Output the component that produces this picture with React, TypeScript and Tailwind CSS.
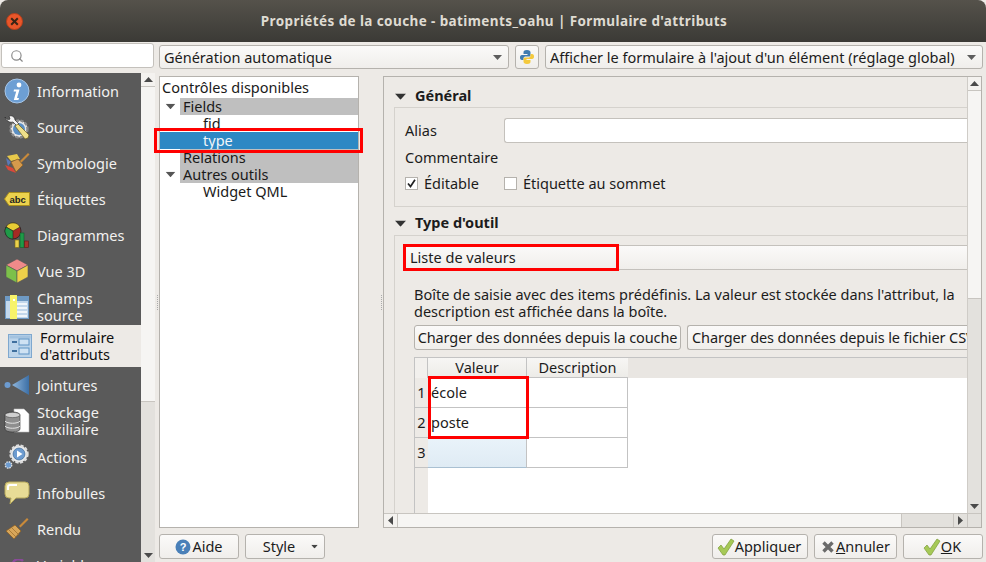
import React from "react";
import { Search } from "lucide-react";

const Caret = ({ className = "" }: { className?: string }) => (
  <svg width="9" height="5" viewBox="0 0 9 5" className={className}>
    <path d="M0 0h9L4.500 5z" fill="currentColor" />
  </svg>
);

const Combo = ({ label, className = "" }: { label: string; className?: string }) => (
  <div className={`h-6 flex items-center justify-between pl-1 pr-[6px] rounded-[3px] border border-[#b5b2ad] bg-gradient-to-b from-[#fbfaf9] to-[#f0eeeb] ${className}`}>
    <span className="whitespace-nowrap overflow-hidden pt-px">{label}</span>
    <Caret className="text-[#5d5d5d] shrink-0" />
  </div>
);

const Btn = ({ children, className = "" }: { children: React.ReactNode; className?: string }) => (
  <div className={`h-[25px] flex items-center justify-center rounded-[3px] border border-[#b5b2ad] bg-gradient-to-b from-[#fbfaf9] to-[#f0eeeb] whitespace-nowrap ${className}`}>
    {children}
  </div>
);

// sidebar icons
const InfoIcon = () => (
  <svg width="26" height="26" viewBox="0 0 26 26">
    <circle cx="13" cy="13" r="12" fill="#6d9fd4" stroke="#a8c6e6" />
    <circle cx="15" cy="7" r="2.4" fill="#fff" />
    <path d="M10 11.500h5.500L13 20h2l-.6 2H9.800l2.400-8.500H9.600z" fill="#fff" />
  </svg>
);
const SourceIcon = () => (
  <svg width="26" height="26" viewBox="0 0 26 26">
    <circle cx="15" cy="15" r="8.500" fill="#e6e6e6" stroke="#8a8a8a" strokeDasharray="3 1.600" strokeWidth="2.400" />
    <circle cx="15" cy="15" r="6" fill="#5b8fc4" />
    <path d="M1 3c2 3 4 3 5 2l-1-3c3-1 6 1 6 4l4 4-2 2-4-4C6 9 2 7 1 3z" fill="#f2f2f2" stroke="#2a2a2a" strokeWidth=".7" />
    <path d="M11 12l3-2 11 11-1 3-3 1z" fill="#efe08a" stroke="#6b5d20" strokeWidth=".7" />
  </svg>
);
const SymbIcon = () => (
  <svg width="26" height="26" viewBox="0 0 26 26">
    <path d="M3 6l10-2 3 5-9 2z" fill="#e8c94a" />
    <path d="M2 8l5 4-3 4z" fill="#5b79b8" />
    <path d="M1 15l8 3 3 5-8-3z" fill="#d8483c" />
    <path d="M7 12l7-3 5 6-7 7z" fill="#d69a4c" stroke="#8a5c20" strokeWidth=".7" />
    <path d="M16 11l8-8 1.500 1.500-8 8z" fill="#c98a3a" />
  </svg>
);
const LabelIcon = () => (
  <svg width="26" height="14" viewBox="0 0 26 14">
    <path d="M5 .5h20.500v13H5L.5 7z" fill="#ecd24d" stroke="#a88e1e" />
    <text x="5.500" y="10.500" fontSize="9.500" fontWeight="700" fill="#222" fontFamily="'Liberation Sans', sans-serif">abc</text>
  </svg>
);
const DiagIcon = () => (
  <svg width="26" height="26" viewBox="0 0 26 26">
    <circle cx="9" cy="9" r="8" fill="#a52a24" stroke="#222" strokeWidth=".8" />
    <path d="M9 9L2 5a8 8 0 0 1 14 0z" fill="#e8cc34" stroke="#222" strokeWidth=".6" />
    <path d="M9 9L2 5a8 8 0 0 0 7 12z" fill="#1f9a48" stroke="#222" strokeWidth=".6" />
    <rect x="11" y="18" width="4" height="7.500" fill="#ecd24d" stroke="#7b6a15" strokeWidth=".6" />
    <rect x="16" y="11" width="4" height="14.500" fill="#1f9a48" stroke="#0f5c28" strokeWidth=".6" />
    <rect x="20.500" y="19" width="4" height="6.500" fill="#a4332b" stroke="#5e1a14" strokeWidth=".6" />
  </svg>
);
const CubeIcon = () => (
  <svg width="24" height="26" viewBox="0 0 24 26">
    <path d="M12 1l11 6-11 6L1 7z" fill="#f08a8a" stroke="#555" strokeWidth=".6" />
    <path d="M1 7l11 6v12L1 19z" fill="#7cc04a" stroke="#555" strokeWidth=".6" />
    <path d="M23 7l-11 6v12l11-6z" fill="#eed04a" stroke="#555" strokeWidth=".6" />
  </svg>
);
const FieldsIcon = () => (
  <svg width="24" height="24" viewBox="0 0 24 24">
    <rect x=".5" y="1.500" width="23" height="22" fill="#c3d8ec" stroke="#6e9ac4" />
    <rect x="1" y="2" width="22" height="4" fill="#6e9ac4" />
    <path d="M11 9h11M11 13h11M11 17h11M11 21h11" stroke="#fff" strokeWidth="1.600" />
    <rect x="5" y="0" width="7" height="25" fill="#f7f36a" />
    <rect x="8" y="4" width="2" height="2" fill="#fff" />
  </svg>
);
const FormIcon = () => (
  <svg width="24" height="24" viewBox="0 0 24 24">
    <rect x=".5" y=".5" width="23" height="23" fill="#bcd4ea" stroke="#7fa8cf" />
    <rect x="1.500" y="1.500" width="21" height="3" fill="#a3c2df" />
    <rect x="11" y="5" width="10" height="6" fill="#cfe2f3" stroke="#5e93c4" />
    <rect x="11" y="14" width="10" height="6" fill="#cfe2f3" stroke="#5e93c4" />
    <rect x="4" y="7" width="5" height="2" fill="#3f6f9e" />
    <rect x="4" y="16" width="5" height="2" fill="#3f6f9e" />
  </svg>
);
const JoinIcon = () => (
  <svg width="26" height="22" viewBox="0 0 26 22">
    <defs>
      <linearGradient id="joinFill" x1="0" x2="1">
        <stop offset="0" stopColor="#8fb6dc" />
        <stop offset="1" stopColor="#3c6fa6" />
      </linearGradient>
    </defs>
    <circle cx="3.500" cy="11" r="3" fill="#6c9bd0" />
    <path d="M8 11L25 1v20z" fill="url(#joinFill)" />
  </svg>
);
const StorageIcon = () => (
  <svg width="26" height="26" viewBox="0 0 26 26">
    <path d="M10 1h10l5 5v18H10z" fill="#fff" stroke="#bbb" strokeWidth=".6" />
    <path d="M1 7c0-4 15-4 15 0v14c0 4-15 4-15 0z" fill="#8f8f8f" stroke="#333" strokeWidth=".6" />
    <ellipse cx="8.500" cy="7" rx="7.500" ry="2.600" fill="#d0d0d0" stroke="#444" strokeWidth=".5" />
    <path d="M1 13c2 3 13 3 15 0M1 18c2 3 13 3 15 0" stroke="#e4e4e4" fill="none" />
  </svg>
);
const ActionsIcon = () => (
  <svg width="26" height="26" viewBox="0 0 26 26">
    <circle cx="15" cy="10" r="8.500" fill="#eee" stroke="#ddd" strokeDasharray="3 1.600" strokeWidth="2.400" />
    <circle cx="15" cy="10" r="6" fill="#6c9bd0" stroke="#2e5a88" strokeWidth=".6" />
    <path d="M13 6.500v7l5.500-3.500z" fill="#fff" />
    <circle cx="4.500" cy="21" r="3.200" fill="#6c9bd0" stroke="#ddd" strokeDasharray="1.500 1" strokeWidth="1.400" />
  </svg>
);
const TipIcon = () => (
  <svg width="26" height="24" viewBox="0 0 26 24">
    <path d="M5 1h16q4 0 4 4v8q0 4-4 4H12l-6 6 1-6H5q-4 0-4-4V5q0-4 4-4z" fill="#e8dc96" stroke="#b7a95c" />
    <path d="M4 9V6q0-2 2-2h7" stroke="#fff" strokeWidth="2" fill="none" />
  </svg>
);
const BrushIcon = () => (
  <svg width="24" height="24" viewBox="0 0 24 24">
    <path d="M14 9L22 1l1.500 1.500-8 8z" fill="#c98a3a" />
    <path d="M1 14l9-6 6 6-7 8z" fill="#d8a65a" stroke="#8a5c20" strokeWidth=".7" />
    <path d="M4 13l7 7M7 11l7 7" stroke="#9a6a2a" strokeWidth=".7" />
  </svg>
);
const VarIcon = () => (
  <svg width="20" height="12" viewBox="0 0 20 12">
    <path d="M16 2C13-1 7 0 6 4S5 10 4 12" stroke="#8a4a9a" strokeWidth="2.400" fill="none" />
  </svg>
);

const navItems = [
  { label: "Information", icon: <InfoIcon /> },
  { label: "Source", icon: <SourceIcon /> },
  { label: "Symbologie", icon: <SymbIcon /> },
  { label: "Étiquettes", icon: <LabelIcon /> },
  { label: "Diagrammes", icon: <DiagIcon /> },
  { label: "Vue 3D", icon: <CubeIcon /> },
  { label: "Champs source", icon: <FieldsIcon /> },
  { label: "Formulaire d'attributs", icon: <FormIcon />, active: true },
  { label: "Jointures", icon: <JoinIcon /> },
  { label: "Stockage auxiliaire", icon: <StorageIcon /> },
  { label: "Actions", icon: <ActionsIcon /> },
  { label: "Infobulles", icon: <TipIcon /> },
  { label: "Rendu", icon: <BrushIcon /> },
  { label: "Variables", icon: <VarIcon /> },
];

const Sidebar = () => (
  <div className="w-[155px] shrink-0 flex flex-col overflow-hidden">
    <div className="h-[25px] mt-px mx-px w-[153px] flex items-center pl-2 bg-white rounded-[3px] border border-[#c4c1bc]">
      <Search size={14} className="text-[#8a8a8a]" />
    </div>
    <div className="flex mt-[5px] flex-1 min-h-0 overflow-hidden">
      <div className="w-[141px] shrink-0 bg-[#5a5a5a] pt-[4px] -mt-[4px] leading-[17px]">
        {navItems.map((n) =>
          n.active ? (
            <div key={n.label} className="h-[42px] shrink-0 flex items-center pl-2 gap-2 bg-[#edeae6] text-[#101010]">
              <div className="w-6 flex justify-center shrink-0">{n.icon}</div>
              <span className="w-[90px]">{n.label}</span>
            </div>
          ) : (
            <div key={n.label} className="h-9 flex items-center pl-1 gap-[7px] text-[#f2f1ef]">
              <div className="w-[26px] flex justify-center shrink-0">{n.icon}</div>
              <span className="w-[90px]">{n.label}</span>
            </div>
          )
        )}
      </div>
      <div className="w-[14px] flex flex-col bg-[#e3e1dd] h-[489px]">
        <div className="h-[14px] flex items-center justify-center bg-[#f4f2ef] border-b border-[#c8c5c0] text-[#4a4a4a]">
          <Caret className="rotate-180" />
        </div>
        <div className="h-[315px] bg-[#f6f5f3] border-b border-[#c8c5c0]" />
        <div className="flex-1" />
        <div className="h-[14px] flex items-center justify-center text-[#4a4a4a]">
          <Caret />
        </div>
      </div>
    </div>
  </div>
);

const Tree = () => (
  <div className="w-[200px] shrink-0 border border-[#b5b2ad] bg-white flex flex-col leading-[17px] text-[#1a1a1a]">
    <div className="h-[21px] pl-[2px] flex items-center">Contrôles disponibles</div>
    <div className="h-[17px] flex items-center">
      <div className="w-[20px] flex justify-center"><Caret className="text-[#555] scale-110" /></div>
      <div className="flex-1 pl-[3px] bg-[#bfbfbf]">Fields</div>
    </div>
    <div className="h-[17px] pl-[43px]">fid</div>
    <div className="h-[17px] pl-[43px] bg-[#2d88c4] text-[#f2f6fa]">type</div>
    <div className="h-[17px] ml-[20px] pl-[3px] bg-[#bfbfbf]">Relations</div>
    <div className="h-[17px] flex items-center">
      <div className="w-[20px] flex justify-center"><Caret className="text-[#555] scale-110" /></div>
      <div className="flex-1 pl-[3px] bg-[#bfbfbf]">Autres outils</div>
    </div>
    <div className="h-[17px] pl-[43px]">Widget QML</div>
  </div>
);

const Cell = ({ children, className = "" }: { children?: React.ReactNode; className?: string }) => (
  <div className={`h-[30px] border-r border-b border-[#c3c3c3] flex items-center pl-[3px] pt-px ${className}`}>{children}</div>
);

const Table = () => (
  <div className="mt-[7px] flex-1 flex flex-col ml-[10px] min-h-0">
    <div className="flex h-[21px] bg-[#e9e6e2] border-t border-[#c3c3c3]">
      <div className="w-[14px] border-x border-[#c3c3c3] bg-[#f2f0ed]" />
      <div className="w-[99px] text-center leading-[19px] border-r border-[#c3c3c3] bg-gradient-to-b from-[#f7f6f4] to-[#ecebe7]">Valeur</div>
      <div className="w-[101px] text-center leading-[19px] bg-gradient-to-b from-[#f7f6f4] to-[#ecebe7]">Description</div>
    </div>
    <div className="flex-1 flex">
      <div className="w-[14px] shrink-0 bg-[#edeae6] border-l border-[#c3c3c3]">
        {["1", "2", "3"].map((r) => (
          <div key={r} className="h-[30px] flex items-center justify-center pt-px border-b border-[#c3c3c3]">{r}</div>
        ))}
      </div>
      <div className="flex-1 bg-white">
        <div className="flex w-[200px] border-t border-[#c3c3c3] -mt-px">
          <Cell className="w-[99px]">école</Cell>
          <Cell className="w-[101px]" />
        </div>
        <div className="flex w-[200px]">
          <Cell className="w-[99px]">poste</Cell>
          <Cell className="w-[101px]" />
        </div>
        <div className="flex w-[200px]">
          <Cell className="w-[99px] bg-gradient-to-b from-[#e9f3fa] to-[#dfebf4] border-b-[#a9c0d2]" />
          <Cell className="w-[101px]" />
        </div>
      </div>
    </div>
  </div>
);

const Panel = () => (
  <div className="w-[599px] shrink-0 border border-[#b5b2ad] flex flex-col">
    <div className="flex-1 flex min-h-0">
      <div className="flex-1 min-w-0 overflow-hidden flex flex-col pl-[10px]">
        <div className="h-[30px] pt-[8px] flex items-center gap-[10px] pl-[2px] font-bold">
          <Caret className="text-[#333] scale-125" />
          <span>Général</span>
        </div>
        <div className="h-[100px] border border-[#d5d2cd] border-r-0 flex flex-col pl-[10px]">
          <div className="flex items-center h-[25px] mt-[10px]">
            <span className="w-[99px]">Alias</span>
            <div className="flex-1 h-[25px] bg-white border border-[#c4c1bc] rounded-l-[3px] border-r-0" />
          </div>
          <div className="h-[17px] leading-[17px] mt-[6px]">Commentaire</div>
          <div className="flex items-center h-[17px] mt-[9px]">
            <div className="w-[13px] h-[13px] bg-white border border-[#b5b2ad] flex items-center justify-center mr-[6px]">
              <svg width="9" height="9" viewBox="0 0 9 9"><path d="M1 4.500l2.500 3L8 .8" stroke="#222" strokeWidth="1.700" fill="none" /></svg>
            </div>
            <span>Éditable</span>
            <div className="w-[13px] h-[13px] bg-white border border-[#b5b2ad] ml-[25px] mr-[6px]" />
            <span>Étiquette au sommet</span>
          </div>
        </div>
        <div className="h-[27px] pt-[3px] mt-px flex items-center gap-[10px] pl-[2px] font-bold">
          <Caret className="text-[#333] scale-125" />
          <span>Type d'outil</span>
        </div>
        <div className="flex-1 min-h-0 border border-[#d5d2cd] border-r-0 border-b-0 flex flex-col pl-[9px]">
          <div className="h-[25px] shrink-0 mt-[9px] flex items-center pl-[5px] border border-[#c4c1bc] border-r-0 rounded-l-[3px] bg-gradient-to-b from-[#fbfaf9] to-[#f0eeeb]">Liste de valeurs</div>
          <div className="ml-[10px] mt-[16px] leading-[17px] whitespace-nowrap">
            Boîte de saisie avec des items prédéfinis. La valeur est stockée dans l'attribut, la
            <br />
            description est affichée dans la boîte.
          </div>
          <div className="flex gap-[6px] ml-[10px] mt-[5px] overflow-hidden tracking-[-0.1px] shrink-0">
            <Btn className="w-[267px] shrink-0">Charger des données depuis la couche</Btn>
            <Btn className="w-[300px] shrink-0 justify-start pl-1 border-r-0">Charger des données depuis le fichier CSV</Btn>
          </div>
          <Table />
        </div>
      </div>
      <div className="w-[14px] shrink-0 flex flex-col bg-[#e3e1dd] border-l border-[#cfccc7]">
        <div className="h-[14px] flex items-center justify-center border-b border-[#c8c5c0] bg-[#f4f2ef] text-[#4a4a4a]">
          <Caret className="rotate-180" />
        </div>
        <div className="h-[208px] bg-[#f6f5f3] border-b border-[#c8c5c0]" />
        <div className="flex-1" />
        <div className="h-[14px] flex items-center justify-center text-[#4a4a4a]">
          <Caret />
        </div>
      </div>
    </div>
    <div className="h-[14px] shrink-0 flex border-t border-[#c8c5c0] bg-[#e3e1dd]">
      <div className="w-[14px] flex items-center justify-center bg-[#f4f2ef] border-r border-[#c8c5c0] text-[#4a4a4a]">
        <Caret className="rotate-90" />
      </div>
      <div className="w-[504px] bg-[#f6f5f3] border-r border-[#c8c5c0]" />
      <div className="flex-1" />
      <div className="w-[14px] flex items-center justify-center text-[#4a4a4a] border-l border-[#c8c5c0]">
        <Caret className="-rotate-90" />
      </div>
      <div className="w-[14px] border-l border-[#c8c5c0]" />
    </div>
  </div>
);

const Check = () => (
  <svg width="18" height="18" viewBox="0 0 18 18">
    <path d="M1 10l3-3 3 4 7-10 3 2-9 14h-2z" fill="#a6c957" stroke="#7d9c3a" strokeWidth=".7" />
  </svg>
);

const Footer = () => (
  <div className="h-[24px] flex items-center mt-[6px]">
    <Btn className="w-[80px] gap-px pt-px">
      <svg width="16" height="16" viewBox="0 0 16 16">
        <circle cx="8" cy="8" r="7.500" fill="#4a80b8" />
        <text x="8" y="12" fontSize="11" fontWeight="700" textAnchor="middle" fill="#fff" fontFamily="'Liberation Sans', sans-serif">?</text>
      </svg>
      Aide
    </Btn>
    <Btn className="w-[80px] ml-[6px] relative pr-[12px] pt-px">
      Style
      <Caret className="absolute right-[5px] top-[9px] text-[#444] scale-75" />
    </Btn>
    <div className="flex-1" />
    <Btn className="w-[96px] pt-px pr-[2px]"><Check />Appliquer</Btn>
    <Btn className="w-[83px] ml-[6px] gap-px pt-px">
      <svg width="14" height="14" viewBox="0 0 14 14"><path d="M2.500 2.500l9 9M11.500 2.500l-9 9" stroke="#6b6b6b" strokeWidth="3.400" /></svg>
      <span><u>A</u>nnuler</span>
    </Btn>
    <Btn className="w-[80px] ml-[6px] border-[#3f7ea8] pt-px pr-[2px] from-[#f6fafd] to-[#e2edf4]"><Check /><span><u>O</u>K</span></Btn>
  </div>
);

export default function App() {
  return (
    <div className="w-[986px] h-[562px] overflow-hidden relative flex flex-col bg-[#edeae6] text-[14.5px] text-[#1c1c1c] font-['Noto_Sans',sans-serif]">
      <div className="h-[42px] shrink-0 rounded-t-[8px] bg-gradient-to-b from-[#55524b] to-[#3b3a36] flex items-center relative">
        <div className="absolute left-[6px] top-[13px] w-[17px] h-[17px] rounded-full bg-[#e9562a] border border-[#b63f1b] flex items-center justify-center">
          <svg width="9" height="9" viewBox="0 0 9 9"><path d="M1.200 1.200l6.600 6.600M7.800 1.200L1.200 7.800" stroke="#3a2415" strokeWidth="2" /></svg>
        </div>
        <div className="flex-1 text-center pl-[2px] text-[#dfdbd2] font-bold text-[13.5px] tracking-[.4px]">
          Propriétés de la couche - batiments_oahu | Formulaire d'attributs
        </div>
      </div>
      <div className="flex-1 flex min-h-0">
        <Sidebar />
        <div className="w-1 shrink-0 flex items-center justify-center">
          <div className="h-[15px] border-l border-dotted border-[#aaa]" />
        </div>
        <div className="flex-1 flex flex-col pr-[3px] pt-[3px] min-w-0">
          <div className="flex h-6 gap-[6px]">
            <Combo label="Génération automatique" className="w-[350px]" />
            <div className="w-6 h-6 rounded-[3px] border border-[#b5b2ad] bg-gradient-to-b from-[#fbfaf9] to-[#f0eeeb] flex items-center justify-center">
              <svg width="16" height="16" viewBox="0 0 16 16">
                <path d="M8 1C5 1 4.500 2 4.500 3.500V5H8.500v1H3C1.500 6 1 7 1 8.500S1.500 11 3 11h1.500V9.500C4.500 8 5.500 7.500 7 7.500h3c1 0 1.500-.5 1.500-1.500V3.500C11.500 2 10.500 1 8 1z" fill="#3f7cb0" />
                <path d="M8 15c3 0 3.500-1 3.500-2.500V11H7.500v-1H13c1.500 0 2-1 2-2.500S14.500 5 13 5h-1.500v1.500C11.500 8 10.500 8.500 9 8.500H6c-1 0-1.500.5-1.500 1.500v2.500C4.500 14 5.500 15 8 15z" fill="#f4c93c" />
              </svg>
            </div>
            <Combo label="Afficher le formulaire à l'ajout d'un élément (réglage global)" className="flex-1 min-w-0" />
          </div>
          <div className="flex-1 flex mt-[7px] min-h-0">
            <Tree />
            <div className="w-[24px] shrink-0 flex items-center justify-end pr-px">
              <div className="h-[15px] border-l border-dotted border-[#aaa]" />
            </div>
            <Panel />
          </div>
          <Footer />
          <div className="h-[4px]" />
        </div>
      </div>
      {/* red annotation boxes */}
      <div className="absolute left-[154px] top-[128px] w-[209px] h-[25px] border-[3px] border-[#f00]" />
      <div className="absolute left-[403px] top-[244px] w-[216px] h-[27px] border-[3px] border-[#f00]" />
      <div className="absolute left-[428px] top-[376px] w-[101px] h-[63px] border-[3px] border-[#f00]" />
    </div>
  );
}
